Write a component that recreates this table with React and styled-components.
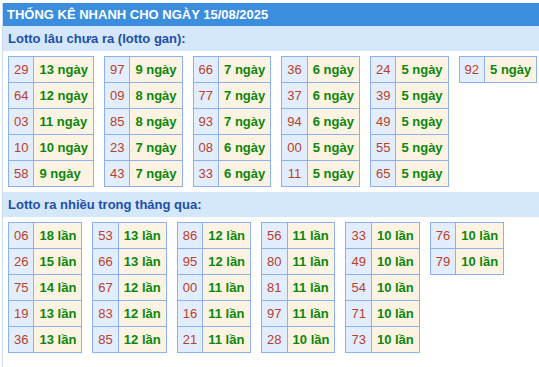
import styled, { createGlobalStyle } from "styled-components";

const GlobalStyle = createGlobalStyle`
  html, body {
    margin: 0;
    padding: 0;
    background: #ffffff;
    font-family: "Liberation Sans", Arial, sans-serif;
  }
`;

const ganData = [
  [["29", 13], ["64", 12], ["03", 11], ["10", 10], ["58", 9]],
  [["97", 9], ["09", 8], ["85", 8], ["23", 7], ["43", 7]],
  [["66", 7], ["77", 7], ["93", 7], ["08", 6], ["33", 6]],
  [["36", 6], ["37", 6], ["94", 6], ["00", 5], ["11", 5]],
  [["24", 5], ["39", 5], ["49", 5], ["55", 5], ["65", 5]],
  [["92", 5]],
];

const hotData = [
  [["06", 18], ["26", 15], ["75", 14], ["19", 13], ["36", 13]],
  [["53", 13], ["66", 13], ["67", 12], ["83", 12], ["85", 12]],
  [["86", 12], ["95", 12], ["00", 11], ["16", 11], ["21", 11]],
  [["56", 11], ["80", 11], ["81", 11], ["97", 11], ["28", 10]],
  [["33", 10], ["49", 10], ["54", 10], ["71", 10], ["73", 10]],
  [["76", 10], ["79", 10]],
];

const StatGroup = ({ rows, unit }) => (
  <Table>
    <tbody>
      {rows.map(([num, count]) => (
        <tr key={num}>
          <NumCell>{num}</NumCell>
          <CountCell>
            {count} {unit}
          </CountCell>
        </tr>
      ))}
    </tbody>
  </Table>
);

const App = () => {
  return (
    <Page>
      <GlobalStyle />
      <Box>
        <Header>THỐNG KÊ NHANH CHO NGÀY 15/08/2025</Header>
        <SubHeader>Lotto lâu chưa ra (lotto gan):</SubHeader>
        <TableRow>
          {ganData.map((rows, i) => (
            <StatGroup key={i} rows={rows} unit="ngày" />
          ))}
        </TableRow>
        <SubHeader>Lotto ra nhiều trong tháng qua:</SubHeader>
        <TableRow>
          {hotData.map((rows, i) => (
            <StatGroup key={i} rows={rows} unit="lần" />
          ))}
        </TableRow>
      </Box>
    </Page>
  );
};
export default App;

const Page = styled.div`
  padding: 3px 0 0 2px;
  overflow: hidden;
`;

const Box = styled.div`
  border-left: 1px solid #c9dbf2;
  min-height: calc(100vh - 3px);
  box-sizing: border-box;
`;

const Header = styled.div`
  background: #3b8ede;
  color: #ffffff;
  font-size: 13px;
  font-weight: 700;
  height: 23px;
  line-height: 23px;
  padding-left: 4px;
  white-space: nowrap;
`;

const SubHeader = styled.div`
  background: #d4e7fb;
  color: #1f4fa8;
  font-size: 13px;
  font-weight: 700;
  height: 25px;
  line-height: 25px;
  padding-left: 5px;
  white-space: nowrap;
`;

const TableRow = styled.div`
  display: flex;
  align-items: flex-start;
  gap: 10px;
  padding: 5px 0 5px 5px;
`;

const Table = styled.table`
  border-collapse: collapse;
  flex: none;
  font-size: 13px;
`;

const Cell = styled.td`
  border: 1px solid #8db0ee;
  height: 26px;
  padding: 0 5px;
  box-sizing: border-box;
  white-space: nowrap;
  text-align: center;
`;

const NumCell = styled(Cell)`
  background: #e2edfd;
  color: #b9402a;
`;

const CountCell = styled(Cell)`
  background: #fdf3e2;
  color: #0b870b;
  font-weight: 700;
  text-align: left;
`;
